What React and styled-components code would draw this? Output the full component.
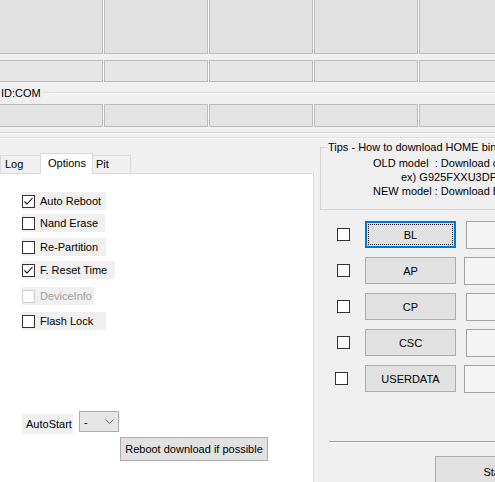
import React from 'react'
import styled, {createGlobalStyle} from 'styled-components'

const GlobalStyle = createGlobalStyle`
  html, body {
    margin: 0;
    padding: 0;
    background: #f0f0f0;
  }
  body {
    font-family: "Liberation Sans", Arial, sans-serif;
    font-size: 11px;
    color: #000;
  }
  * {
    box-sizing: border-box;
  }
`

const Window = styled.div`
  width: 495px;
  height: 482px;
  overflow: hidden;
  background: #f0f0f0;
  display: flex;
  flex-direction: column;
`

const SlotRow = styled.div`
  display: flex;
  gap: 1px;
  flex: 0 0 ${p => p.$h}px;
  margin: ${p => p.$mt}px 0 0 -1px;
  background: #fafafa;
`

const Slot = styled.div`
  flex: 0 0 104px;
  border: 1px solid #bcbcbc;
  background: ${p => p.$bg};
`

const IdGroup = styled.div`
  display: flex;
  align-items: center;
  height: 22px;
  flex-shrink: 0;
  span {
    padding: 0 2px 0 1px;
  }
`

const EtchLine = styled.div`
  flex: 1;
  height: 2px;
  border-top: 1px solid #d8d8d8;
  border-bottom: 1px solid #fff;
`

const Rule = styled.div`
  flex-shrink: 0;
  height: 2px;
  margin-top: ${p => p.$mt}px;
  border-top: 1px solid ${p => p.$c};
  border-bottom: 1px solid #fafafa;
`

const Bottom = styled.div`
  display: flex;
  flex: 1;
  min-height: 0;
  margin-top: 1px;
`

const LeftCol = styled.div`
  flex: 0 0 314px;
  display: flex;
  flex-direction: column;
  padding-top: 13px;
`

const TabStrip = styled.div`
  display: flex;
  align-items: flex-end;
  height: 20px;
  position: relative;
  z-index: 1;
`

const Tab = styled.div`
  width: ${p => p.$w}px;
  height: ${p => (p.$active ? 21 : 18)}px;
  margin-left: ${p => p.$ml}px;
  margin-bottom: ${p => (p.$active ? -1 : 0)}px;
  padding-left: ${p => p.$pl}px;
  border: 1px solid #d9d9d9;
  border-bottom: none;
  background: ${p => (p.$active ? '#fff' : '#f0f0f0')};
  line-height: ${p => (p.$active ? 18 : 17)}px;
  position: relative;
  z-index: ${p => (p.$active ? 2 : 1)};
`

const Panel = styled.div`
  flex: 1;
  background: #fff;
  border-top: 1px solid #d9d9d9;
  border-right: 1px solid #d9d9d9;
  padding-left: 22px;
  display: flex;
  flex-direction: column;
`

const OptRow = styled.div`
  display: flex;
  align-items: center;
  gap: 5px;
  width: ${p => p.$w}px;
  height: 18px;
  margin-top: ${p => p.$mt}px;
  background: #f0f0f0;
  color: ${p => (p.$disabled ? '#a0a0a0' : '#000')};
  white-space: nowrap;
`

const Box = styled.span`
  flex: 0 0 13px;
  width: 13px;
  height: 13px;
  border: 1px solid ${p => (p.$disabled ? '#cccccc' : '#333')};
  background: #fff;
  display: inline-flex;
  align-items: center;
  justify-content: center;
`

const AutoRow = styled.div`
  display: flex;
  align-items: flex-start;
  gap: 6px;
  margin-top: 81px;
`

const AutoLabel = styled.div`
  width: 51px;
  height: 20px;
  margin-top: 3px;
  padding-left: 4px;
  line-height: 20px;
  background: #f0f0f0;
`

const Select = styled.div`
  width: 40px;
  height: 21px;
  border: 1px solid #acacac;
  background: #e6e6e6;
  display: flex;
  align-items: center;
  justify-content: space-between;
  padding: 0 4px 0 4px;
`

const Button = styled.div`
  background: #e1e1e1;
  border: 1px solid #adadad;
  display: flex;
  align-items: center;
  justify-content: center;
  white-space: nowrap;
  flex-shrink: 0;
`

const RebootButton = styled(Button)`
  width: 148px;
  height: 24px;
  margin: 3px 0 0 98px;
`

const RightCol = styled.div`
  flex: 1;
  padding-left: 6px;
  display: flex;
  flex-direction: column;
`

const Tips = styled.fieldset`
  width: 400px;
  min-width: 0;
  margin: 1px 0 0 0;
  padding: 2px 0 11px 0;
  border: 1px solid #d5d5d5;
  legend {
    margin-left: 6px;
    padding: 0 1px;
    line-height: 13px;
    white-space: nowrap;
  }
`

const TipLine = styled.div`
  padding-left: ${p => p.$indent}px;
  line-height: 14px;
  white-space: pre;
`

const FileRow = styled.div`
  display: flex;
  align-items: center;
  height: 27px;
  flex-shrink: 0;
  margin-top: ${p => p.$mt}px;
`

const CheckCell = styled.div`
  flex: 0 0 45px;
  padding-left: ${p => p.$pl}px;
  display: flex;
`

const SlotButton = styled(Button)`
  width: 91px;
  height: 27px;
  border-color: ${p => (p.$focus ? '#0078d7' : '#adadad')};
  box-shadow: ${p => (p.$focus ? 'inset 0 0 0 1px #0078d7' : 'none')};
  outline: ${p => (p.$focus ? '1px dotted #000' : 'none')};
  outline-offset: -4px;
`

const PathBox = styled.div`
  flex: 0 0 80px;
  height: 28px;
  margin-left: ${p => p.$ml}px;
  border: 1px solid #a4a4a4;
  background: #f4f4f4;
`

const Separator = styled.div`
  height: 2px;
  margin: 49px 0 0 9px;
  border-top: 1px solid #a0a0a0;
  border-bottom: 1px solid #fafafa;
  flex-shrink: 0;
`

const StartButton = styled(Button)`
  width: 120px;
  height: 32px;
  margin: 13px 0 0 115px;
`

const Check = ({checked, disabled}) => (
  <Box $disabled={disabled}>
    {checked && (
      <svg width="11" height="11" viewBox="0 0 11 11">
        <path d="M1.5 5.5 L4 8 L9.5 2" fill="none" stroke="#000" strokeWidth="1.1"/>
      </svg>
    )}
  </Box>
)

const options = [
  {label: 'Auto Reboot', checked: true, w: 84, mt: 18},
  {label: 'Nand Erase', w: 83, mt: 4},
  {label: 'Re-Partition', w: 84, mt: 6},
  {label: 'F. Reset Time', checked: true, w: 93, mt: 5},
  {label: 'DeviceInfo', disabled: true, w: 72, mt: 8},
  {label: 'Flash Lock', w: 84, mt: 7},
]

const files = [
  {name: 'BL', focus: true, pl: 17, ml: 10, mt: 11},
  {name: 'AP', pl: 17, ml: 8, mt: 9},
  {name: 'CP', pl: 17, ml: 10, mt: 9},
  {name: 'CSC', pl: 17, ml: 10, mt: 9},
  {name: 'USERDATA', pl: 15, ml: 8, mt: 9},
]

const slots = [0, 1, 2, 3, 4]

export default function App() {
  return (
    <Window>
      <GlobalStyle/>
      <SlotRow $h={55} $mt={-1}>
        {slots.map(i => <Slot key={i} $bg="#e1e1e1"/>)}
      </SlotRow>
      <SlotRow $h={22} $mt={6}>
        {slots.map(i => <Slot key={i} $bg="#e6e6e6"/>)}
      </SlotRow>
      <IdGroup>
        <span>ID:COM</span>
        <EtchLine/>
      </IdGroup>
      <SlotRow $h={23} $mt={0}>
        {slots.map(i => <Slot key={i} $bg="#e3e3e3"/>)}
      </SlotRow>
      <Rule $mt={5} $c="#d6d6d6"/>
      <Rule $mt={3} $c="#e2e2e2"/>

      <Bottom>
        <LeftCol>
          <TabStrip>
            <Tab $w={41} $ml={0} $pl={4}>Log</Tab>
            <Tab $w={53} $ml={-1} $pl={7} $active>Options</Tab>
            <Tab $w={39} $ml={-1} $pl={3}>Pit</Tab>
          </TabStrip>
          <Panel>
            {options.map(o => (
              <OptRow key={o.label} $w={o.w} $mt={o.mt} $disabled={o.disabled}>
                <Check checked={o.checked} disabled={o.disabled}/>
                {o.label}
              </OptRow>
            ))}
            <AutoRow>
              <AutoLabel>AutoStart</AutoLabel>
              <Select>
                <span>-</span>
                <svg width="9" height="6" viewBox="0 0 9 6">
                  <polyline points="0.5,0.5 4.5,4.5 8.5,0.5" fill="none" stroke="#555" strokeWidth="1"/>
                </svg>
              </Select>
            </AutoRow>
            <RebootButton>Reboot download if possible</RebootButton>
          </Panel>
        </LeftCol>

        <RightCol>
          <Tips>
            <legend>Tips - How to download HOME binary</legend>
            <TipLine $indent={52}>OLD model  : Download one binary    "(FILE_NAME)_HOME.tar.md5"</TipLine>
            <TipLine $indent={80}>ex) G925FXXU3DPAD_G925FOXA3DPAB_G925FXXU3DPAD_HOME.tar.md5</TipLine>
            <TipLine $indent={52}>NEW model : Download BL + AP + CP + HOME_CSC</TipLine>
          </Tips>
          {files.map(f => (
            <FileRow key={f.name} $mt={f.mt}>
              <CheckCell $pl={f.pl}>
                <Check/>
              </CheckCell>
              <SlotButton $focus={f.focus}>{f.name}</SlotButton>
              <PathBox $ml={f.ml}/>
            </FileRow>
          ))}
          <Separator/>
          <StartButton>Start</StartButton>
        </RightCol>
      </Bottom>
    </Window>
  )
}
